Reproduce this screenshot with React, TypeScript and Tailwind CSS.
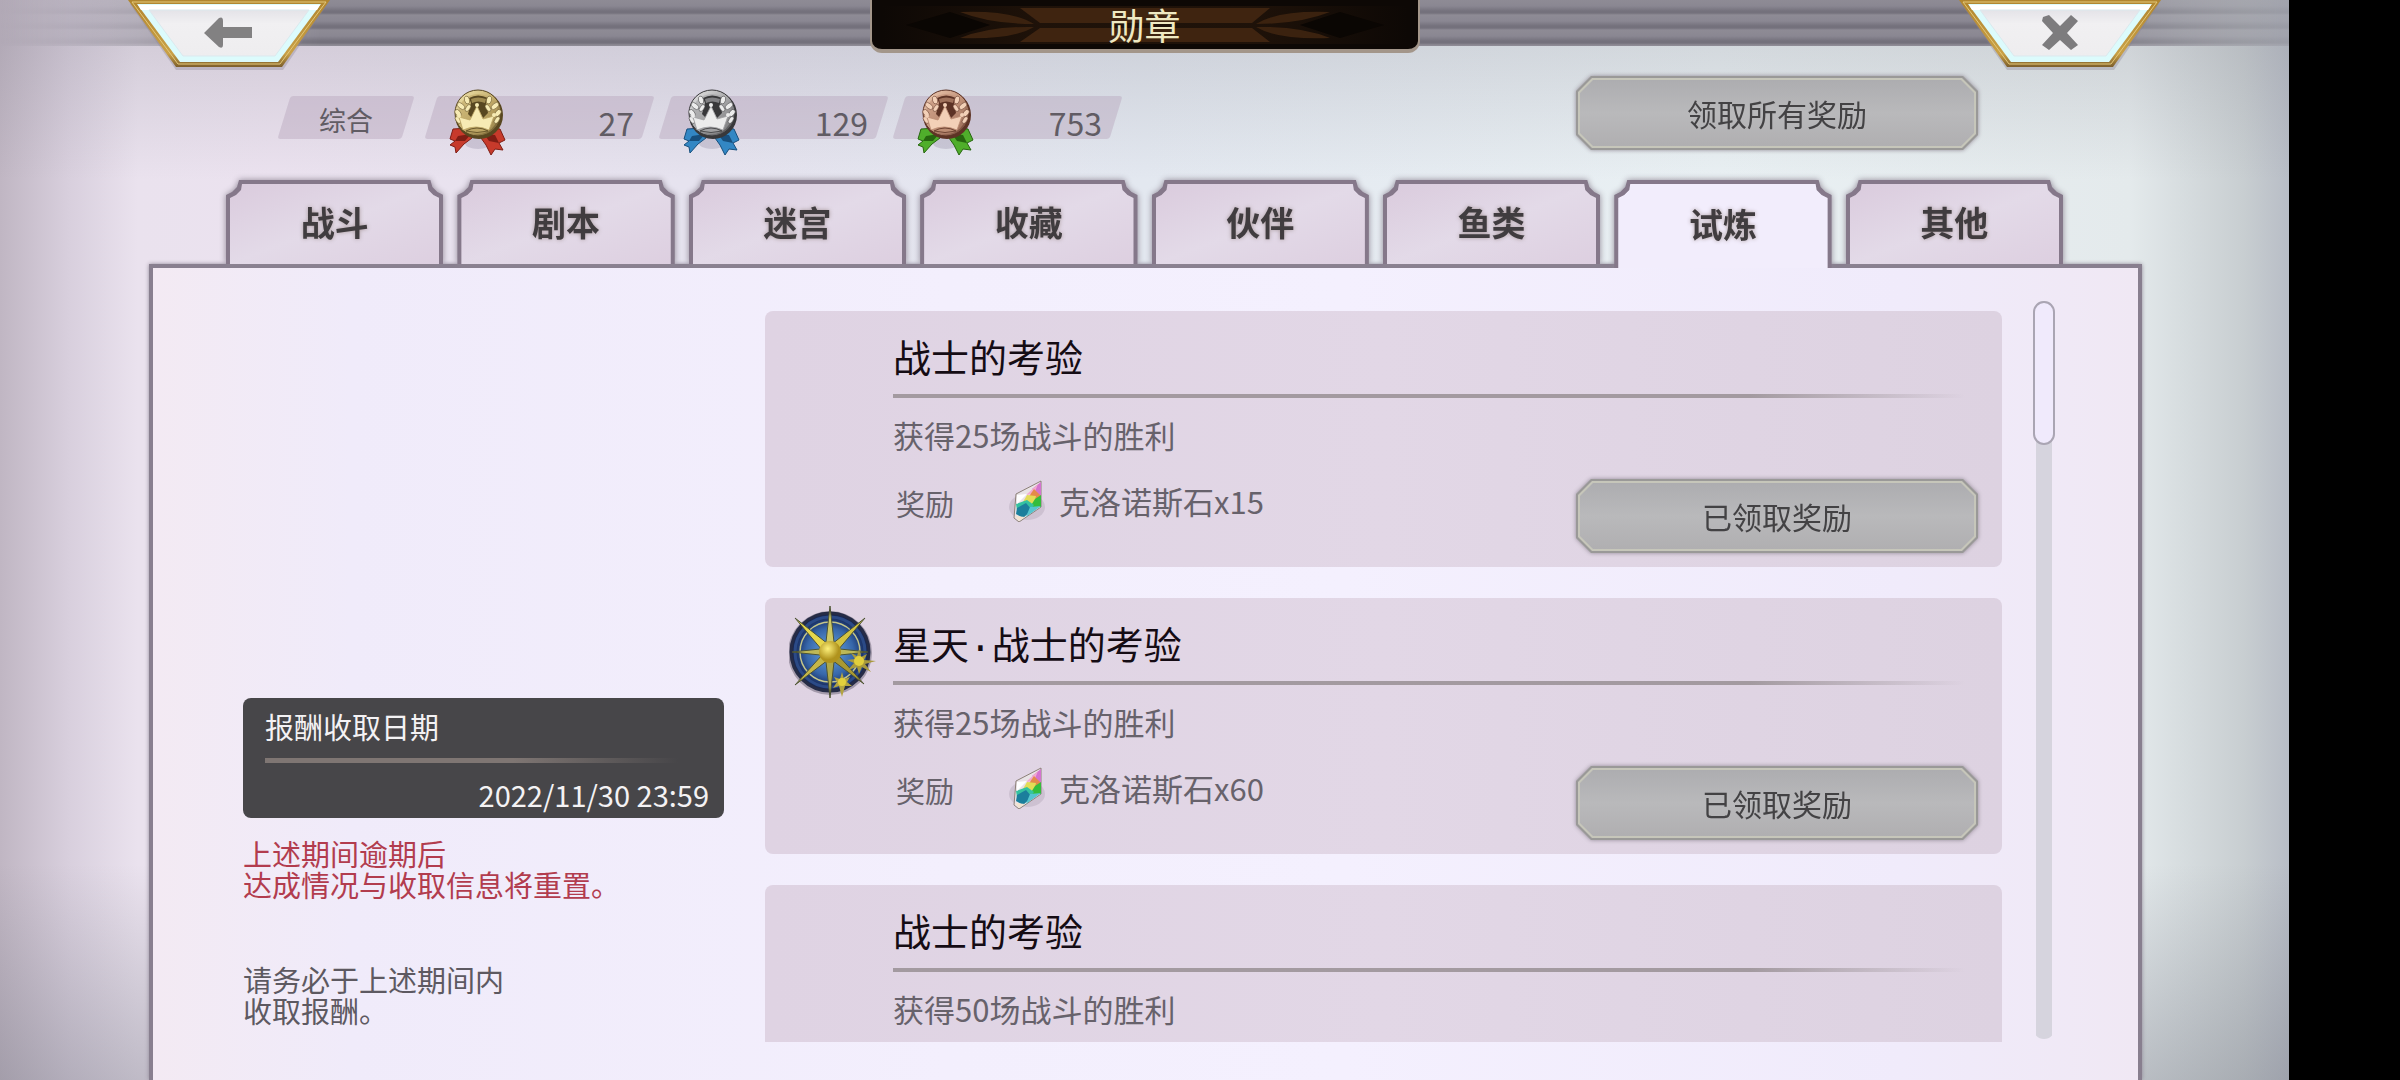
import { Fragment, useState } from "react";
import clsx from "clsx";

const tabs = ["战斗", "剧本", "迷宫", "收藏", "伙伴", "鱼类", "试炼", "其他"];

const medals = [
  { name: "gold", count: 27, light: "#f7ebb4", mid: "#bda665", dark: "#584720", ribbon: "#c73a2b", shade: "#7e1d14" },
  { name: "silver", count: 129, light: "#ececec", mid: "#a0a0a2", dark: "#38383a", ribbon: "#3387c4", shade: "#174f7d" },
  { name: "bronze", count: 753, light: "#f3d0b7", mid: "#bd8d74", dark: "#5d3325", ribbon: "#4fae2b", shade: "#26660f" }
];

const trials = [
  { title: "战士的考验", goal: "获得25场战斗的胜利", reward: "克洛诺斯石x15", star: false },
  { title: "星天·战士的考验", goal: "获得25场战斗的胜利", reward: "克洛诺斯石x60", star: true },
  { title: "战士的考验", goal: "获得50场战斗的胜利", reward: "克洛诺斯石x15", star: false }
];

const TrapezoidButton = ({ label, children }: { label: string; children: React.ReactNode }) => {
  return <button type="button" aria-label={label} className="h-[70px] w-[202px] shrink-0">
      <svg viewBox="0 0 202 70" className="h-full w-full">
        <defs>
          <linearGradient id={`rim-${label}`} x1="0" y1="0" x2="0" y2="1">
            <stop offset="0" stopColor="#b0852f" />
            <stop offset="0.8" stopColor="#c9a047" />
            <stop offset="1" stopColor="#7d5f2c" />
          </linearGradient>
          <linearGradient id={`face-${label}`} x1="0" y1="0" x2="0" y2="1">
            <stop offset="0" stopColor="#e4e3e8" />
            <stop offset="0.3" stopColor="#f1f0f2" />
            <stop offset="1" stopColor="#eeedef" />
          </linearGradient>
        </defs>
        <path d="M2 4 L200 4 L155 70 L48 70Z" fill="#8a8292" opacity="0.35" />
        <path d="M0 0 H202 L154 67 H48Z" fill={`url(#rim-${label})`} />
        <path d="M4 2 H198 L152 64 H50Z" fill="none" stroke="#e3c878" strokeWidth="1" />
        <path d="M9 4 H193 L150 62 H52Z" fill="#dcfbfc" />
        <path d="M10 5 H192 L189 10 H13Z" fill="#fff" />
        <path d="M21 10 H181 L147 56 H55Z" fill={`url(#face-${label})`} stroke="#dbe9ee" strokeWidth="1" />
        {children}
      </svg>
    </button>;
};

const PlateButton = ({ label }: { label: string }) => {
  return <button type="button" disabled className="h-[74px] w-[402px] shrink-0 drop-shadow-[0_0_2px_#8f8893]">
      <span className="block h-full w-full bg-[#9a9998] p-[2px] [clip-path:polygon(15px_0,calc(100%-15px)_0,100%_15px,100%_calc(100%-15px),calc(100%-15px)_100%,15px_100%,0_calc(100%-15px),0_15px)]">
        <span className="block h-full w-full bg-[#c6c6ba] p-[2px] [clip-path:polygon(14px_0,calc(100%-14px)_0,100%_14px,100%_calc(100%-14px),calc(100%-14px)_100%,14px_100%,0_calc(100%-14px),0_14px)]">
          <span className="flex h-full w-full items-center justify-center bg-linear-to-b from-[#adadb0] via-[#b9b9bb] to-[#b0afb1] text-[30px] leading-none text-[#434244] [clip-path:polygon(13px_0,calc(100%-13px)_0,100%_13px,100%_calc(100%-13px),calc(100%-13px)_100%,13px_100%,0_calc(100%-13px),0_13px)]">
            {label}
          </span>
        </span>
      </span>
    </button>;
};

const MedalIcon = ({ medal }: { medal: (typeof medals)[number] }) => {
  return <svg viewBox="0 0 57 66" className="relative h-[66px] w-[57px]" aria-hidden="true">
      <defs>
        <linearGradient id={`coin-${medal.name}`} x1="0" y1="0" x2="1" y2="1">
          <stop offset="0" stopColor={medal.light} />
          <stop offset="0.55" stopColor={medal.mid} />
          <stop offset="1" stopColor={medal.dark} />
        </linearGradient>
      </defs>
      <ellipse cx="29" cy="54" rx="13" ry="6" fill="#8d86a0" opacity="0.3" />
      <path d="M20 39 L4 40 L1 50 L6 52 L1 56 L6 58 L7 64 L15 55 L23 49Z" fill={medal.ribbon} stroke={medal.shade} />
      <path d="M37 39 L51 40 L56 51 L50 54 L54 61 L46 60 L42 66 L37 56 L32 49Z" fill={medal.ribbon} stroke={medal.shade} />
      <path d="M22 45 L9 47 L6 52 L16 52Z M35 45 L46 46 L50 54 L40 52Z" fill={medal.shade} />
      <ellipse cx="30" cy="26" rx="24" ry="24" fill={medal.dark} />
      <circle cx="29" cy="24" r="23" fill={`url(#coin-${medal.name})`} stroke={medal.dark} />
      <circle cx="29" cy="25" r="20" fill={medal.mid} opacity="0.55" />
      <path d="M20 9 Q29 4 39 9 L37 13 L39 24 L34 29 L28 17 L23 29 L19 25 L22 14Z" fill={medal.dark} />
      <path d="M22 10 Q29 7 37 10 L36 14 Q29 11 23 14Z" fill={medal.mid} opacity="0.7" />
      <g fill={medal.light} stroke={medal.dark} strokeWidth="0.5">
        <ellipse cx="18" cy="11" rx="2.5" ry="4" transform="rotate(-15 18 11)" />
        <ellipse cx="12" cy="17" rx="2.5" ry="4.5" transform="rotate(-50 12 17)" />
        <ellipse cx="19" cy="19" rx="2" ry="4" transform="rotate(35 19 19)" />
        <ellipse cx="9" cy="24" rx="2.5" ry="4" transform="rotate(-40 9 24)" />
        <ellipse cx="9" cy="31" rx="2" ry="4" transform="rotate(-35 9 31)" />
        <ellipse cx="40" cy="11" rx="2.5" ry="4" transform="rotate(15 40 11)" />
        <ellipse cx="46" cy="17" rx="2.5" ry="4.5" transform="rotate(50 46 17)" />
        <ellipse cx="39" cy="19" rx="2" ry="4" transform="rotate(-35 39 19)" />
        <ellipse cx="49" cy="24" rx="2.5" ry="4" transform="rotate(40 49 24)" />
        <ellipse cx="48" cy="31" rx="2" ry="4" transform="rotate(35 48 31)" />
      </g>
      <path d="M14 41 L10 28 L21 31 L28 17 L34 30 L45 27 L40 41 Q27 35 14 41Z" fill={medal.light} stroke={medal.mid} strokeWidth="0.8" />
      <path d="M17 42 Q28 36 39 42 Q28 45 17 42Z" fill={medal.mid} stroke={medal.dark} strokeWidth="0.8" />
      <circle cx="28" cy="16" r="2" fill={medal.light} />
      <circle cx="10" cy="27" r="2" fill={medal.light} />
      <circle cx="45" cy="26" r="2" fill={medal.light} />
    </svg>;
};

const CompassIcon = () => {
  return <svg viewBox="0 0 88 92" className="h-[92px] w-[88px]" aria-hidden="true">
      <defs>
        <radialGradient id="compass-sky">
          <stop offset="0" stopColor="#6aa9e4" />
          <stop offset="0.6" stopColor="#3767aa" />
          <stop offset="0.8" stopColor="#1f3c76" />
          <stop offset="1" stopColor="#182347" />
        </radialGradient>
        <radialGradient id="compass-hub" cx="0.4" cy="0.35">
          <stop offset="0" stopColor="#fdf07a" />
          <stop offset="1" stopColor="#b0931d" />
        </radialGradient>
      </defs>
      <circle cx="41" cy="47" r="42" fill="#4a4558" opacity="0.4" />
      <circle cx="41" cy="46" r="39" fill="url(#compass-sky)" stroke="#262c46" strokeWidth="3" />
      <circle cx="41" cy="46" r="35" fill="none" stroke="#2b4a86" strokeWidth="3" />
      <circle cx="41" cy="46" r="30" fill="none" stroke="#c3c58b" strokeWidth="1.5" />
      <g stroke="#4c5334" strokeWidth="1">
        <path d="M41 0 L45 36 L41 46 L37 36Z" fill="#cdc966" />
        <path d="M41 92 L45 56 L41 46 L37 56Z" fill="#aea94a" />
        <path d="M3 46 L31 43 L41 46 L31 49Z" fill="#bdb857" />
        <path d="M79 46 L51 43 L41 46 L51 49Z" fill="#bdb857" />
        <path d="M6 12 L39 38 L41 46 L33 44Z" fill="#e6d64c" />
        <path d="M76 12 L43 38 L41 46 L49 44Z" fill="#d3c342" />
        <path d="M6 79 L33 49 L41 46 L39 54Z" fill="#c4b648" />
        <path d="M75 78 L49 49 L41 46 L43 54Z" fill="#a99932" />
      </g>
      <circle cx="41" cy="46" r="11" fill="url(#compass-hub)" />
      <path d="M70 43 L72 51 L78 48 L75 54 L87 55 L76 58 L82 66 L73 61 L70 68 L68 61 L59 64 L65 57 L58 54 L66 53 L62 47 L68 50Z" fill="#a99a3b" />
      <path d="M53 66 L55 73 L61 71 L58 76 L63 80 L56 80 L53 91 L50 80 L44 82 L48 76 L45 71 L51 73Z" fill="#b3a440" />
      <circle cx="70" cy="55" r="5" fill="#e2cf3c" />
      <circle cx="53" cy="76" r="4" fill="#e2cf3c" />
    </svg>;
};

const CrystalIcon = () => {
  return <svg viewBox="0 0 38 42" className="h-[42px] w-[38px] shrink-0" aria-hidden="true">
      <ellipse cx="19" cy="27" rx="18" ry="13" fill="#a99fb0" opacity="0.35" />
      <path d="M33 1 L8 14 L6 38 L11 42 L33 27Z" fill="#e9e3e6" stroke="#8c8078" />
      <path d="M33 2 L24 9 L33 20Z" fill="#d474cf" />
      <path d="M30 4 L18 15 L26 14Z" fill="#f3a9cf" />
      <path d="M26 9 L33 16 L28 21 L20 18Z" fill="#e48a4a" />
      <path d="M19 15 L28 16 L26 24 L15 22Z" fill="#e3dc55" />
      <path d="M33 15 L33 27 L22 27 L27 19Z" fill="#34bd3c" />
      <path d="M8 24 L19 20 L26 25 L22 30 L9 30Z" fill="#35c2a0" />
      <path d="M9 28 L18 23 L24 30 L15 38 L8 34Z" fill="#1b7f9c" />
      <path d="M22 27 L33 26 L18 37Z" fill="#55c5cf" />
      <path d="M9 15 L19 14 L9 24Z" fill="#fff" />
      <path d="M7 36 L17 37 L11 41Z" fill="#f3e3cf" />
    </svg>;
};

// The middle dot is taken from a narrower face, the CJK one is a full square wide.
const TrialTitle = ({ title }: { title: string }) => {
  return <h2 className="text-[38px] leading-[50px] text-[#150c14]">
      {title.split("·").map((part, index) => <Fragment key={index}>
          {index > 0 && <span className="font-['Liberation_Mono',monospace] leading-none">·</span>}
          {part}
        </Fragment>)}
    </h2>;
};

const TrialCard = ({ trial }: { trial: (typeof trials)[number] }) => {
  return <li className="flex h-[256px] shrink-0 rounded-lg bg-linear-to-r from-[#dfd3e3] via-[#e2d7e6] to-[#ddd2e1]">
      <div className="w-[128px] shrink-0 pt-2 pl-[24px]">{trial.star && <CompassIcon />}</div>
      <div className="flex-1 pt-5 pr-[24px]">
        <TrialTitle title={trial.title} />
        <div className="mt-[13px] mr-[13px] h-1 bg-linear-to-r from-[#a39aa0] from-80% to-transparent" />
        <p className="mt-[17px] text-[31px] leading-[40px] text-[#67626b]">{trial.goal}</p>
        <div className="flex items-start justify-between pt-6">
          <div className="flex items-center text-[31px] leading-[40px] text-[#67626b]">
            <span className="w-[115px] pt-1 pl-[3px] text-[29px]">奖励</span>
            <CrystalIcon />
            <span className="pl-[13px]">{trial.reward}</span>
          </div>
          <PlateButton label="已领取奖励" />
        </div>
      </div>
    </li>;
};

const App = () => {
  const [activeTab, setActiveTab] = useState("试炼");

  return <div className="flex h-screen overflow-hidden bg-black font-['Noto_Sans_CJK_SC',sans-serif]">
      <main className="relative flex flex-1 flex-col bg-[linear-gradient(to_bottom,rgba(120,118,130,0.2)_40px,transparent_180px,transparent_80%,rgba(110,112,124,0.35)),linear-gradient(to_right,#c0b6c3,#d8cfdd_3%,#eae2ee_6%,#ebe2ef_12%,#e6e3ef_30%,#e3e8f0_50%,#e9f0f3_75%,#e4eaec_93%,#c8ced1_98%,#b8bdc6)]">
        <div className="absolute inset-x-0 top-0 h-[46px] bg-[repeating-linear-gradient(to_bottom,#8e8b95_0px,#8a8792_6px,#74717c_11px,#74717c_13px,#8e8b95_15px)] mask-[linear-gradient(to_right,transparent,black_14%,black_90%,rgba(0,0,0,0.3))]" />

        <header className="relative flex h-[68px] shrink-0 items-start justify-between px-[128px]">
          <TrapezoidButton label="返回">
            <path d="M76 33 L91 18 Q95 16 95 21 V27 H124 V38 H95 V45 Q95 49 91 47Z" fill="#828182" />
          </TrapezoidButton>
          <div className="relative h-[53px] w-[550px] overflow-hidden rounded-b-[12px] border-x-2 border-b-4 border-[#a3968a] bg-[#0d0805]">
            <svg viewBox="0 0 546 49" className="absolute inset-0 h-full w-full" aria-hidden="true">
              <defs>
                <linearGradient id="title-brown" x1="0" x2="1">
                  <stop offset="0" stopColor="#0d0805" />
                  <stop offset="0.3" stopColor="#3f2410" />
                  <stop offset="0.7" stopColor="#3f2410" />
                  <stop offset="1" stopColor="#0d0805" />
                </linearGradient>
              </defs>
              <path d="M10 6 H536 V44 H10Z" fill="url(#title-brown)" opacity="0.35" />
              <path d="M148 8 H398 L380 23 H168Z M168 28 H380 L398 42 H148Z" fill="#3f2410" />
              <path d="M88 12 Q140 10 162 24 Q118 24 88 12Z M88 38 Q140 40 162 27 Q118 26 88 38Z" fill="#3b220f" />
              <path d="M458 12 Q406 10 384 24 Q428 24 458 12Z M458 38 Q406 40 384 27 Q428 26 458 38Z" fill="#3b220f" />
              <path d="M34 25 L78 12 L118 25 L78 38Z M512 25 L468 12 L428 25 L468 38Z" fill="#0a0603" />
            </svg>
            <h1 className="relative text-center text-[36px] leading-[48px] text-[#efe9c2]">勋章</h1>
          </div>
          <TrapezoidButton label="关闭">
            <path d="M84 17 L90 15 L101 26 L112 15 L119 21 L108 33 L119 45 L112 50 L101 40 L90 50 L83 45 L94 33 L83 21Z" fill="#7d7c7e" />
          </TrapezoidButton>
        </header>

        <section className="flex shrink-0 items-start justify-between pt-2 pr-[311px] pl-[278px]">
          <ul className="flex gap-[5px] pt-5 text-[32px] leading-none text-[#615c64]">
            <li className="relative mr-[6px] flex h-[43px] w-[136px] items-center justify-center pt-1 before:absolute before:inset-x-[6px] before:inset-y-0 before:-skew-x-[17deg] before:rounded-[3px] before:bg-[#b9a7bd]/45">
              <span className="relative text-[27px]">综合</span>
            </li>
            {medals.map((medal) => <li key={medal.name} className="relative flex h-[43px] w-[229px] items-center justify-between pt-2 pr-[20px] pl-[24px] before:absolute before:inset-x-[6px] before:inset-y-0 before:-skew-x-[17deg] before:rounded-[3px] before:bg-[#b9a7bd]/45">
                <MedalIcon medal={medal} />
                <span className="relative">{medal.count}</span>
              </li>)}
          </ul>
          <PlateButton label="领取所有奖励" />
        </section>

        <nav className="relative z-10 -mb-1 grid h-[118px] shrink-0 grid-cols-8 items-start gap-x-[14px] overflow-hidden px-[226px] pt-[30px]">
          {tabs.map((tab) => {
          const active = tab === activeTab;
          return <button key={tab} type="button" aria-pressed={active} onClick={() => setActiveTab(tab)} className={clsx("drop-shadow-[0_0_3px_#8f8795]", active ? "h-[88px]" : "h-[84px]")}>
                <span className="block h-full w-full bg-[#85788a] px-1 pt-1 [clip-path:polygon(0_15px,6px_12px,11px_7px,13px_0,calc(100%-13px)_0,calc(100%-11px)_7px,calc(100%-6px)_12px,100%_15px,100%_100%,0_100%)]">
                  <span className={clsx("flex h-full w-full items-center justify-center pb-1 text-[34px] leading-none font-bold text-[#403c3f] [clip-path:polygon(0_14px,6px_11px,11px_6px,12px_0,calc(100%-12px)_0,calc(100%-11px)_6px,calc(100%-6px)_11px,100%_14px,100%_100%,0_100%)] [text-shadow:0_0_4px_#a89a9c]", active ? "bg-[#f2edfc]" : "bg-linear-to-br from-[#dacbdd] via-[#e3dae8] to-[#ddcfe0]")}>
                    {tab}
                  </span>
                </span>
              </button>;
        })}
        </nav>

        <section className="mr-[147px] ml-[149px] flex min-h-0 flex-1 border-x-4 border-t-4 border-[#887f8f] bg-[linear-gradient(to_right,#f3eaf3,#f0ebfa_10%,#f3effd_40%,#f4f0fe_60%,#f0ebfb_88%,#f0e8f4)] pr-[83px] pl-[90px] shadow-[0_0_4px_#8f8795]">
          <aside className="flex w-[481px] shrink-0 flex-col justify-end pb-[54px] text-[29px] leading-[31px]">
            <dl className="h-[120px] rounded-lg bg-[#474649] pt-[13px] pr-[15px] pl-[22px] text-[#f4f2f4]">
              <dt>报酬收取日期</dt>
              <div className="mt-[16px] mr-[31px] h-[5px] bg-linear-to-r from-[#7f7673] from-60% to-transparent" />
              <dd className="mt-[16px] text-right">2022/11/30 23:59</dd>
            </dl>
            <p className="mt-5 text-[#b23c4e]">
              上述期间逾期后
              <br />
              达成情况与收取信息将重置。
            </p>
            <p className="mt-[64px] text-[#5d5961]">
              请务必于上述期间内
              <br />
              收取报酬。
            </p>
          </aside>

          <ul className="mt-[43px] mb-[38px] ml-[41px] flex flex-1 flex-col gap-[31px] overflow-y-auto [scrollbar-width:none]">
            {trials.map((trial, index) => <TrialCard key={index} trial={trial} />)}
          </ul>

          <div className="mt-[33px] mb-[41px] ml-[31px] flex w-[22px] flex-col items-center rounded-full bg-[linear-gradient(#d6d4de,#d6d4de)] bg-[length:16px_100%] bg-center bg-no-repeat">
            <div className="h-[144px] w-full rounded-full border-2 border-[#aaa5b3] bg-[#f0eafc]" />
          </div>
        </section>
      </main>

      <div className="w-[111px] shrink-0 bg-black" />
    </div>;
};

export default App;
